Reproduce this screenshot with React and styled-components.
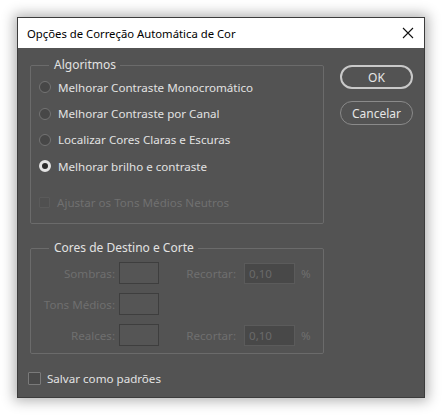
import React from 'react';
import styled, { createGlobalStyle } from 'styled-components';

const GlobalStyle = createGlobalStyle`
  html, body {
    margin: 0;
    background: #ffffff;
  }
  body {
    font-family: "Noto Sans", "Open Sans", sans-serif;
  }
`;

const Page = styled.div`
  padding: 17px 18px 17px 17px;
  width: 443px;
  height: 416px;
  box-sizing: border-box;
`;

const Window = styled.div`
  width: 408px;
  height: 381px;
  box-sizing: border-box;
  border: 1px solid #3c3c3c;
  background: #535353;
  box-shadow: 0 0 12px 3px rgba(0, 0, 0, 0.3);
  display: flex;
  flex-direction: column;
`;

const TitleBar = styled.div`
  height: 30px;
  background: #ffffff;
  display: flex;
  align-items: center;
  justify-content: space-between;
  padding: 0 8px 0 9px;
  font-size: 11.3px;
  color: #000;
`;

const CloseButton = styled.button`
  border: none;
  background: none;
  padding: 0;
  width: 16px;
  height: 16px;
  display: flex;
  align-items: center;
  justify-content: center;
  cursor: pointer;
`;

const Body = styled.div`
  flex: 1;
  display: flex;
  padding: 9px 11px 0 12px;
  gap: 16px;
  font-size: 11.6px;
`;

const Column = styled.div`
  width: 294px;
  display: flex;
  flex-direction: column;
`;

const Buttons = styled.div`
  display: flex;
  flex-direction: column;
  gap: 12px;
  padding-top: 8px;
`;

const PillButton = styled.button`
  width: 73px;
  height: 24px;
  border-radius: 12px;
  border: ${(p) => (p.$primary ? '2px solid #c9c9c9' : '1px solid #8a8a8a')};
  background: #535353;
  color: #e6e6e6;
  font-family: inherit;
  font-size: 12px;
  padding: 0;
  cursor: pointer;
`;

const Group = styled.fieldset`
  margin: 0;
  border: 1px solid #6b6b6b;
  border-radius: 2px;
  padding: 0 0 0 8px;
  height: ${(p) => p.$height}px;
  box-sizing: border-box;
`;

const Legend = styled.legend`
  margin-left: 10px;
  padding: 0 4px 0 5px;
  font-size: 12px;
  color: #e2e2e2;
  line-height: 16px;
`;

const OptionRow = styled.label`
  display: flex;
  align-items: center;
  gap: 7px;
  height: 26.4px;
  color: ${(p) => (p.$disabled ? '#707070' : '#e2e2e2')};
`;

const RadioDot = styled.span`
  width: 12px;
  height: 12px;
  border-radius: 50%;
  box-sizing: border-box;
  border: ${(p) => (p.$checked ? '3px solid #e4e4e4' : '1px solid #737373')};
  background: ${(p) => (p.$checked ? '#2b2b2b' : '#474747')};
  flex-shrink: 0;
`;

const CheckBox = styled.span`
  width: ${(p) => (p.$disabled ? 11 : 13)}px;
  height: ${(p) => (p.$disabled ? 11 : 13)}px;
  box-sizing: border-box;
  border: 1px solid ${(p) => (p.$disabled ? '#5a5a5a' : '#7a7a7a')};
  background: ${(p) => (p.$disabled ? '#505050' : '#4a4a4a')};
  border-radius: 1px;
  flex-shrink: 0;
`;

const TargetGrid = styled.div`
  display: grid;
  grid-template-columns: 76px 40px 77px 51px auto;
  grid-auto-rows: 22px;
  row-gap: 9px;
  column-gap: 4px;
  align-items: center;
  padding-top: 6px;
`;

const FieldLabel = styled.span`
  color: #6f6f6f;
  text-align: right;
  grid-column: ${(p) => p.$col};
  padding-right: ${(p) => (p.$col === 3 ? 4 : 0)}px;
`;

const Swatch = styled.span`
  width: 40px;
  height: 22px;
  box-sizing: border-box;
  border: 1px solid #3e3e3e;
  background: #555555;
  grid-column: 2;
`;

const NumberField = styled.span`
  height: 21px;
  box-sizing: border-box;
  background: #484848;
  border: 1px solid #5b5b5b;
  color: #6a6a6a;
  padding: 2px 0 0 4px;
  grid-column: 4;
`;

const Percent = styled.span`
  color: #6f6f6f;
  grid-column: 5;
  padding-left: 2px;
`;

const SaveRow = styled(OptionRow)`
  margin-top: 11px;
  margin-left: -2px;
  gap: 6px;
`;

const algorithms = [
  'Melhorar Contraste Monocromático',
  'Melhorar Contraste por Canal',
  'Localizar Cores Claras e Escuras',
  'Melhorar brilho e contraste',
];

const targets = [
  { label: 'Sombras:', clip: '0,10' },
  { label: 'Tons Médios:' },
  { label: 'Realces:', clip: '0,10' },
];

export default function App() {
  return (
    <Page>
      <GlobalStyle />
      <Window>
        <TitleBar>
          <span>Opções de Correção Automática de Cor</span>
          <CloseButton aria-label="Fechar">
            <svg width="12" height="12" viewBox="0 0 12 12">
              <path d="M1 1L11 11M11 1L1 11" stroke="#111" strokeWidth="1.1" />
            </svg>
          </CloseButton>
        </TitleBar>
        <Body>
          <Column>
            <Group $height={167}>
              <Legend>Algoritmos</Legend>
              <div style={{ marginTop: 1 }}>
                {algorithms.map((name, i) => (
                  <OptionRow key={name}>
                    <RadioDot $checked={i === 3} />
                    {name}
                  </OptionRow>
                ))}
              </div>
              <OptionRow $disabled style={{ marginTop: 10 }}>
                <CheckBox $disabled />
                Ajustar os Tons Médios Neutros
              </OptionRow>
            </Group>
            <Group $height={114} style={{ marginTop: 16 }}>
              <Legend>Cores de Destino e Corte</Legend>
              <TargetGrid>
                {targets.map((t) => (
                  <React.Fragment key={t.label}>
                    <FieldLabel $col={1}>{t.label}</FieldLabel>
                    <Swatch />
                    {t.clip && (
                      <>
                        <FieldLabel $col={3}>Recortar:</FieldLabel>
                        <NumberField>{t.clip}</NumberField>
                        <Percent>%</Percent>
                      </>
                    )}
                  </React.Fragment>
                ))}
              </TargetGrid>
            </Group>
            <SaveRow>
              <CheckBox />
              Salvar como padrões
            </SaveRow>
          </Column>
          <Buttons>
            <PillButton $primary>OK</PillButton>
            <PillButton>Cancelar</PillButton>
          </Buttons>
        </Body>
      </Window>
    </Page>
  );
}
